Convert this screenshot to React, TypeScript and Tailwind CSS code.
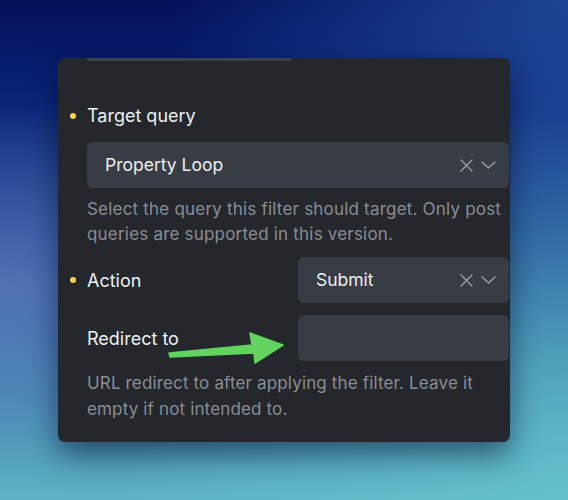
import React from "react";

const XIcon = () => (
    <svg width="13" height="13" viewBox="0 0 13 13" fill="none" stroke="#9a9ea5" strokeWidth="1.4" strokeLinecap="round">
        <path d="M1 1 L12 12 M12 1 L1 12" />
    </svg>
);

const ChevronIcon = () => (
    <svg width="15" height="8" viewBox="0 0 15 8" fill="none" stroke="#9a9ea5" strokeWidth="1.4" strokeLinecap="round" strokeLinejoin="round">
        <path d="M1 1 L7.5 7 L14 1" />
    </svg>
);

const SelectBox = ({ value }: { value: string }) => (
    <div className="flex h-[46px] items-center rounded-[6px] bg-[#383d45] pl-[18px] pr-[13px]">
        <span className="text-[17.5px] text-[#eceef0]">{value}</span>
        <div className="ml-auto flex items-center gap-[8px]">
            <XIcon />
            <ChevronIcon />
        </div>
    </div>
);

const Bullet = ({ on }: { on?: boolean }) => (
    <div className="flex w-[29px] shrink-0 justify-center">
        {on && <span className="h-[6px] w-[6px] rounded-full bg-[#f4d24e]" />}
    </div>
);

const App = () => {
    return (
        <div className="relative h-[500px] w-[568px] overflow-hidden pl-[58px] pt-[58px] font-['Inter',sans-serif]">
            <div className="absolute inset-0 h-[500px] w-[568px] bg-[radial-gradient(ellipse_at_0%_58%,rgba(110,130,200,0.55),transparent_45%),radial-gradient(ellipse_at_100%_100%,rgba(100,200,205,0.7),transparent_55%),radial-gradient(ellipse_at_100%_0%,rgba(40,90,170,0.7),transparent_50%),linear-gradient(180deg,#03105a_0%,#0a2274_18%,#25539a_50%,#3f82ad_75%,#5eb3c4_100%)]" />
            <div className="relative h-[384px] w-[452px] overflow-hidden rounded-[7px] bg-[#24272c] shadow-[0_12px_30px_rgba(0,10,40,0.55)]">
                <div className="ml-[29px] h-[3px] w-[205px] rounded-b-[3px] bg-[#3b4048]" />

                <div className="mt-[43px] flex items-center">
                    <Bullet on />
                    <span className="text-[18px] leading-[24px] text-[#eef0f2]">Target query</span>
                </div>

                <div className="ml-[29px] mr-[1px] mt-[14px]">
                    <SelectBox value="Property Loop" />
                    <p className="mt-[9px] text-[17px] leading-[25px] tracking-[0.2px] text-[#8a8e94]">
                        Select the query this filter should target. Only post queries are supported in this version.
                    </p>
                </div>

                <div className="mr-[1px] mt-[10px] flex items-center">
                    <Bullet on />
                    <div className="grid flex-1 grid-cols-2 items-center">
                        <span className="text-[18px] text-[#eef0f2]">Action</span>
                        <SelectBox value="Submit" />
                    </div>
                </div>

                <div className="mr-[1px] mt-[12px] flex items-center">
                    <Bullet />
                    <div className="grid flex-1 grid-cols-2 items-center">
                        <span className="text-[18px] text-[#eef0f2]">Redirect to</span>
                        <div className="h-[46px] rounded-[6px] bg-[#383d45]" />
                    </div>
                </div>

                <p className="ml-[29px] mr-[1px] mt-[9px] text-[17px] leading-[26px] tracking-[0.15px] text-[#8a8e94]">
                    URL redirect to after applying the filter. Leave it empty if not intended to.
                </p>

                <svg className="absolute left-[107px] top-[270px]" width="125" height="40" viewBox="0 0 125 40">
                    <polygon
                        points="4,25 87,17 85,5 118,17 90,35 89,25 5,29"
                        fill="#62d35e"
                        stroke="#62d35e"
                        strokeWidth="1.5"
                        strokeLinejoin="round"
                    />
                </svg>
            </div>
        </div>
    );
};

export default App;
